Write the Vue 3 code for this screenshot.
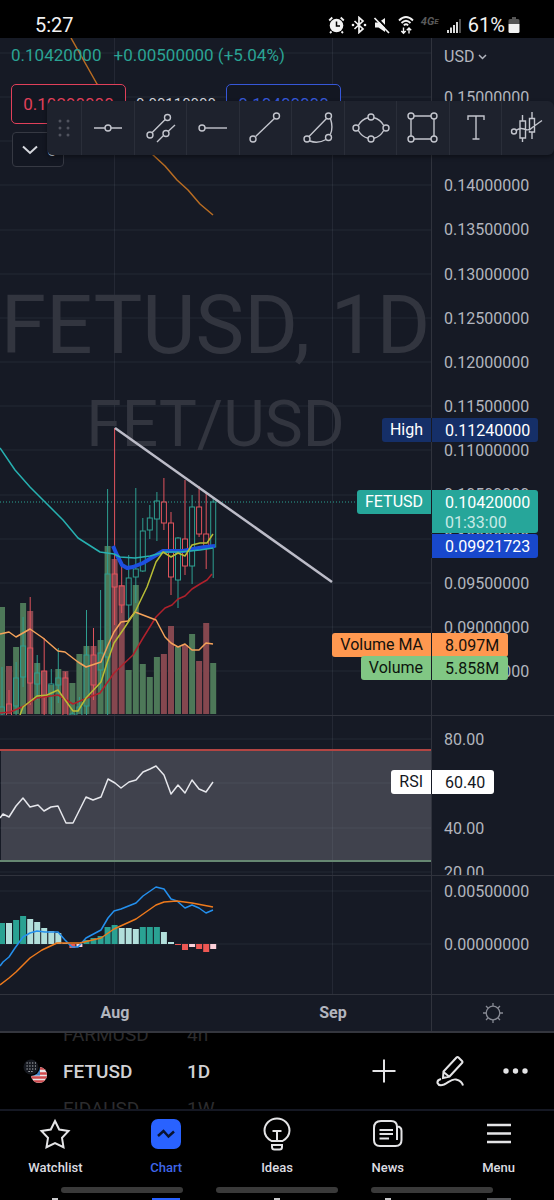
<script setup>
import { ref } from 'vue'

const STEP = 7.04
const FIRST = 2
const barX = (i) => Math.round((FIRST + i * STEP) * 10) / 10

// [high, low, body top, body bottom, direction, volume top]
const candles = [
  [667, 716, 707, 714, 'up', 607],
  [690, 716, 704, 716, 'down', 666],
  [662, 716, 678, 706, 'up', 647],
  [617, 687, 646, 677, 'up', 603],
  [597, 705, 648, 683, 'down', 611],
  [655, 700, 673, 684, 'up', 663],
  [638, 716, 671, 697, 'down', 671],
  [669, 716, 684, 693, 'up', 685],
  [648, 703, 678, 685, 'up', 669],
  [672, 716, 678, 716, 'down', 671],
  [712, 716, 714, 716, 'up', 683],
  [697, 716, 707, 716, 'up', 654],
  [610, 716, 655, 706, 'up', 646],
  [628, 700, 655, 685, 'down', 646],
  [590, 690, 653, 670, 'up', 640],
  [489, 716, 574, 657, 'up', 546],
  [428, 625, 574, 587, 'down', 559],
  [563, 613, 586, 605, 'down', 585],
  [555, 620, 578, 605, 'up', 670],
  [488, 603, 569, 577, 'up', 585],
  [518, 572, 531, 571, 'up', 664],
  [505, 539, 518, 530, 'up', 677],
  [492, 541, 501, 519, 'up', 657],
  [478, 530, 502, 523, 'down', 654],
  [512, 595, 523, 577, 'down', 626],
  [537, 608, 538, 580, 'up', 647],
  [480, 575, 539, 566, 'down', 645],
  [495, 584, 507, 566, 'up', 634],
  [486, 537, 507, 534, 'down', 661],
  [493, 569, 534, 546, 'down', 623],
  [497, 578, 502, 547, 'up', 663],
].map(([high, low, top, bottom, dir, vol], i) => ({ high, low, top, bottom, dir, vol, x: barX(i) }))

const ZERO = 944
const histogram = [
  [923, 'g'], [923, 'l'], [920, 'g'], [916, 'g'], [919, 'l'], [922, 'l'], [928, 'l'], [931, 'l'],
  [933, 'l'], [943, 'l'], [948, 'r'], [947, 'p'], [940, 'g'], [938, 'g'], [936, 'g'], [927, 'g'],
  [925, 'g'], [928, 'l'], [928, 'l'], [929, 'l'], [927, 'g'], [927, 'g'], [927, 'g'], [932, 'l'],
  [942, 'l'], [945, 'r'], [950, 'r'], [947, 'p'], [949, 'r'], [952, 'r'], [949, 'p'],
].map(([v, tone], i) => ({ tone, x: barX(i), y: Math.min(v, ZERO), h: Math.abs(v - ZERO) }))

const priceGrid = [53, 97, 141, 185, 230, 274, 318, 362, 406, 450, 495, 539, 583, 627, 671]
const priceLabels = [
  '0.15000000', '0.14500000', '0.14000000', '0.13500000', '0.13000000', '0.12500000', '0.12000000',
  '0.11500000', '0.11000000', '0.10500000', '0.10000000', '0.09500000', '0.09000000', '0.08500000',
]
const months = ['Aug', 'Sep']
const monthX = [114.5, 332.5]

const tabs = ['Watchlist', 'Chart', 'Ideas', 'News', 'Menu']
const activeTab = ref('Chart')
const currency = ref('USD')
</script>

<template>
  <div class="app">
    <header class="status">
      <span class="clock">5:27</span>
      <div class="tray">
        <svg width="17" height="18" viewBox="0 0 17 18" aria-label="Alarm">
          <circle cx="8.500" cy="9.500" r="6.800" fill="#f2f2f2" />
          <path d="M1.200 4.500 4.300 1.500M15.800 4.500 12.700 1.500M3.500 15.500 2 17M13.500 15.500 15 17" stroke="#f2f2f2" stroke-width="1.800" fill="none" />
          <path d="M8.500 5.500V10H12" stroke="#000" stroke-width="1.500" fill="none" />
        </svg>
        <svg width="16" height="18" viewBox="0 0 16 18" aria-label="Bluetooth">
          <path d="M3.500 5 12 13 8 16.500V1.500L12 5 3.500 13" stroke="#f2f2f2" stroke-width="1.700" fill="none" />
          <circle cx="2" cy="9" r="1.300" fill="#f2f2f2" /><circle cx="14" cy="9" r="1.300" fill="#f2f2f2" />
        </svg>
        <svg width="18" height="18" viewBox="0 0 18 18" aria-label="Muted">
          <path d="M2 6.500H5.500L12 2V16L5.500 11.500H2Z" fill="#f2f2f2" />
          <path d="M3 1 17 15.500" stroke="#000" stroke-width="2" />
          <path d="M1.500 2 16 17" stroke="#f2f2f2" stroke-width="1.700" />
        </svg>
        <svg class="wifi" width="18" height="20" viewBox="0 0 18 20" aria-label="Wi-Fi">
          <path d="M2 5.500Q9-1.500 16 5.500M4.500 8Q9 3.500 13.500 8M6.800 10.300Q9 8.300 11.200 10.300" stroke="#f2f2f2" stroke-width="1.800" fill="none" />
          <path d="M6.500 12.500V18M4.300 16 6.500 18.300 8.700 16M12 18.500V13M9.800 15.200 12 12.900 14.200 15.200" stroke="#f2f2f2" stroke-width="1.400" fill="none" />
        </svg>
        <span class="network">4G<small>E</small></span>
        <svg width="16" height="18" viewBox="0 0 16 18" aria-label="Signal">
          <path d="M2 14V17M5 11.500V17M8 9V17M11 6V17" stroke="#f2f2f2" stroke-width="1.800" />
          <path d="M14 3V17" stroke="#5a5a5a" stroke-width="1.800" />
        </svg>
        <span class="battery-level">61%</span>
        <svg class="battery" width="12" height="18" viewBox="0 0 12 18" aria-label="Battery">
          <path d="M4 1H8V3H10Q11.500 3 11.500 4.500V8H.5V4.500Q.5 3 2 3H4Z" fill="#555" />
          <path d="M.5 8H11.500V15.500Q11.500 17 10 17H2Q.5 17 .5 15.500Z" fill="#f2f2f2" />
        </svg>
      </div>
    </header>

    <main class="chart">
      <section class="pane">
        <div class="plot">
          <svg class="canvas" width="100%" height="677" aria-label="FETUSD daily price">
            <g transform="translate(0 -38)">
              <line v-for="y in priceGrid" :key="y" x1="0" x2="100%" :y1="y" :y2="y" class="grid" />
              <line v-for="x in monthX" :key="x" :x1="x" :x2="x" y1="38" y2="715" class="grid" />
              <text x="50%" y="353" class="mark big">FETUSD, 1D</text>
              <text x="50%" y="446" class="mark small">FET/USD</text>
              <rect v-for="c in candles" :key="'v' + c.x" :x="c.x - 3" :y="c.vol" width="6" :height="714 - c.vol" :class="['vol', c.dir]" />
              <line x1="0" x2="100%" y1="502" y2="502" class="last" />
              <g v-for="c in candles" :key="c.x" :class="['candle', c.dir]">
                <path :d="`M${c.x} ${c.high}V${c.top}M${c.x} ${c.bottom}V${c.low}`" />
                <rect :x="c.x - 2.5" :y="c.top" width="5" :height="c.bottom - c.top" />
              </g>
              <polyline class="ln slow" points="71,38 97,84 130,131 152,154 165,166 177,180 188,190 200,204 213,215" />
              <polyline class="ln red" points="0,713 10,712 15,710 22,707 37,698 58,695 73,704 87,698 100,693 114,673 133,655 143,638 156,617 165,608 172,605 178,599 185,596 192,589 200,584 207,580 212,574" />
              <polyline class="ln blue" points="113,546 117,555 122,565 127,568 133,567 143,563 153,557 163,551 172,551 183,551 193,549 205,547 215,546" />
              <polyline class="ln teal" points="0,448 15,470 30,487 45,502 63,520 78,538 89,545 100,552 114,554 120,557 135,558 150,556 165,552 180,552 200,550 213,548" />
              <polyline class="ln orange" points="0,634 9,632 16,637 30,629 43,638 58,651 65,652 78,662 86,667 101,662 108,645 114,632 121,622 128,621 135,612 156,620 165,637 171,643 178,647 185,644 192,650 199,650 206,643 213,644" />
              <polyline class="ln yellow" points="20,715 23,707 37,696 47,695 58,690 73,711 78,711 86,698 101,682 107,663 114,643 123,630 135,612 147,587 156,562 163,552 171,557 178,553 185,556 192,545 200,543 207,543 213,534" />
              <line class="trend" x1="115" y1="428" x2="332" y2="582" />
            </g>
          </svg>
          <div class="quote">
            <span>0.10420000</span>
            <span>+0.00500000 (+5.04%)</span>
          </div>
          <div class="deal">
            <button class="side sell">0.10290000</button>
            <span class="spread">0.00110000</span>
            <button class="side buy">0.10400000</button>
          </div>
          <button class="collapse" aria-label="Show 6 indicators">
            <svg width="18" height="12" viewBox="0 0 18 12"><path d="M2 2.500 9 9 16 2.500" stroke="#d5d7dd" stroke-width="2" fill="none" /></svg>
            <span>6</span>
          </button>
        </div>
        <div class="axis">
          <label class="currency">
            <select v-model="currency" aria-label="Currency"><option>USD</option></select>
            <svg width="9" height="6" viewBox="0 0 9 6"><path d="M1 1 4.500 4.500 8 1" stroke="#b2b5be" stroke-width="1.500" fill="none" /></svg>
          </label>
          <ul class="scale price">
            <li v-for="p in priceLabels" :key="p">{{ p }}</li>
          </ul>
          <div class="tag high"><b>High</b>0.11240000</div>
          <div class="tag now"><b>FETUSD</b>0.10420000<span>01:33:00</span></div>
          <div class="tag ma">0.09921723</div>
          <div class="tag vma"><b>Volume MA</b>8.097M</div>
          <div class="tag volume"><b>Volume</b>5.858M</div>
        </div>
      </section>

      <section class="pane">
        <div class="plot">
          <svg class="canvas" width="100%" height="159" aria-label="RSI">
            <g transform="translate(0 -716)">
              <rect x="1" y="750" width="100%" height="111" fill="#40424d" />
              <line v-for="y in [739, 783, 828, 872]" :key="y" x1="0" x2="100%" :y1="y" :y2="y" class="grid" />
              <line v-for="x in monthX" :key="x" :x1="x" :x2="x" y1="715" y2="875" class="grid" />
              <line x1="0" x2="100%" y1="750" y2="750" stroke="#b34543" stroke-width="2" />
              <line x1="0" x2="100%" y1="861" y2="861" stroke="#668772" stroke-width="2" />
              <polyline class="ln rsi" points="0,818 3,814 9,817 16,806 23,798 30,807 38,805 44,811 51,807 58,806 66,823 73,823 80,809 86,797 93,800 101,797 108,779 115,783 121,788 129,782 136,780 143,772 150,769 156,766 164,775 171,794 178,785 185,793 192,780 199,789 206,792 213,782" />
            </g>
          </svg>
        </div>
        <div class="axis clip">
          <ul class="scale rsi-scale">
            <li>80.00</li><li>60.00</li><li>40.00</li><li>20.00</li>
          </ul>
        </div>
        <div class="tag rsi-tag"><b>RSI</b>60.40</div>
      </section>

      <section class="pane">
        <div class="plot">
          <svg class="canvas" width="100%" height="118" aria-label="MACD">
            <g transform="translate(0 -876)">
              <line v-for="y in [891, 944]" :key="y" x1="0" x2="100%" :y1="y" :y2="y" class="grid" />
              <line v-for="x in monthX" :key="x" :x1="x" :x2="x" y1="875" y2="994" class="grid" />
              <rect v-for="b in histogram" :key="b.x" :x="b.x - 3" :y="b.y" width="6" :height="b.h" :class="['hist', b.tone]" />
              <polyline class="ln macd" points="0,966 3,962 9,957 15,948 23,937 30,933 37,931 45,932 58,932 65,940 72,947 78,947 86,938 101,930 108,918 114,911 121,909 136,903 143,896 156,887 164,889 171,899 177,901 185,908 192,905 199,908 206,913 213,910" />
              <polyline class="ln signal" points="0,985 9,978 16,972 23,965 30,958 42,950 57,943 80,943 101,938 114,929 136,919 156,905 164,902 177,901 192,903 213,907" />
            </g>
          </svg>
        </div>
        <div class="axis">
          <ul class="scale macd-scale">
            <li>0.00500000</li><li>0.00000000</li>
          </ul>
        </div>
      </section>

      <section class="pane">
        <div class="months"><span v-for="m in months" :key="m">{{ m }}</span></div>
        <div class="axis corner">
          <button aria-label="Chart settings">
            <svg width="22" height="22" viewBox="0 0 22 22" fill="none" stroke="#868993" stroke-width="1.300">
              <circle cx="11" cy="11" r="6.800" />
              <path d="M11 4V1M11 18V21M4 11H1M18 11H21M6.200 6.200 4 4M15.800 6.200 18 4M6.200 15.800 4 18M15.800 15.800 18 18" />
            </svg>
          </button>
        </div>
      </section>

      <div class="tools" role="toolbar" aria-label="Drawing tools">
        <span class="grip">
          <svg width="14" height="18" viewBox="0 0 14 18" fill="#50535e">
            <circle cx="3" cy="2" r="1.500" /><circle cx="11" cy="2" r="1.500" /><circle cx="3" cy="9" r="1.500" />
            <circle cx="11" cy="9" r="1.500" /><circle cx="3" cy="16" r="1.500" /><circle cx="11" cy="16" r="1.500" />
          </svg>
        </span>
        <button aria-label="Horizontal line">
          <svg viewBox="0 0 40 40"><path d="M6 20H17M23 20H34" /><circle cx="20" cy="20" r="3" /></svg>
        </button>
        <button aria-label="Parallel channel">
          <svg viewBox="0 0 40 40"><path d="M12.200 24.600 25.200 11.400M17 34 23.500 27.500M28 23.500 35 17" /><circle cx="10" cy="27" r="3" /><circle cx="27.500" cy="9.500" r="3" /><circle cx="26" cy="25.500" r="3" /></svg>
        </button>
        <button aria-label="Horizontal ray">
          <svg viewBox="0 0 40 40"><path d="M12 20H34" /><circle cx="9" cy="20" r="3" /></svg>
        </button>
        <button aria-label="Trend line">
          <svg viewBox="0 0 40 40"><path d="M10.600 28.600 29.400 10.400" /><circle cx="8" cy="31" r="3" /><circle cx="31.500" cy="8" r="3" /></svg>
        </button>
        <button aria-label="Arc">
          <svg viewBox="0 0 40 40"><path d="M11 28.500 28.500 10.500M32.500 10.800Q35.500 20 32.300 26.500M11.800 33Q20 36 28 31.500" /><circle cx="9" cy="31" r="3" /><circle cx="30.500" cy="8" r="3" /><circle cx="30.500" cy="29.500" r="3" /></svg>
        </button>
        <button aria-label="Ellipse">
          <svg viewBox="0 0 40 40"><path d="M7.300 17.500Q11 11 17 9.800M23 9.800Q29 11 32.700 17.500M7.300 22.500Q11 29 17 30.200M23 30.200Q29 29 32.700 22.500" /><circle cx="20" cy="9" r="3" /><circle cx="20" cy="31" r="3" /><circle cx="5" cy="20" r="3" /><circle cx="35" cy="20" r="3" /></svg>
        </button>
        <button aria-label="Rectangle">
          <svg viewBox="0 0 40 40"><path d="M11 8H28M11 31H28M8 11V28M31 11V28" /><circle cx="8" cy="8" r="3" /><circle cx="31" cy="8" r="3" /><circle cx="8" cy="31" r="3" /><circle cx="31" cy="31" r="3" /></svg>
        </button>
        <button aria-label="Text">
          <svg viewBox="0 0 40 40"><path d="M12 12V8H28V12M20 8V31M16.500 31H23.500" /></svg>
        </button>
        <button aria-label="Forecast">
          <svg viewBox="0 0 40 40"><path d="M14.500 7V13M14.500 30V34M24 4V10.500M24 24V31M12 13H17.500V30H12ZM21.500 10.500H26.500V24H21.500ZM8 22.500Q12 19.500 16 21 21 23.500 25 19L34 12.500" /><circle cx="6" cy="23.500" r="2.500" /></svg>
        </button>
      </div>
    </main>

    <section class="picker">
      <svg class="coin" width="24" height="24" viewBox="0 0 24 24" aria-hidden="true">
        <defs><clipPath id="flag"><circle cx="16" cy="16" r="8" /></clipPath></defs>
        <g clip-path="url(#flag)">
          <rect x="8" y="8" width="16" height="16" fill="#e8e4e6" />
          <path d="M8 9.500H24M8 14.500H24M8 18.500H24M8 22.500H24" stroke="#cf4a4d" stroke-width="2.400" />
          <rect x="8" y="8" width="9" height="8.500" fill="#3f7fc4" />
        </g>
        <circle cx="8" cy="8" r="9" fill="#000" /><circle cx="8" cy="8" r="7.500" fill="#15181f" />
        <path d="M3.500 4H13M3.500 7H13M3.500 10H13M5.500 12.500H11" stroke="#c8cbd0" stroke-width="1.200" stroke-dasharray="1.200 1.600" />
      </svg>
      <ul class="wheel symbols"><li>FARMUSD</li><li class="on">FETUSD</li><li>FIDAUSD</li></ul>
      <ul class="wheel"><li>4h</li><li class="on">1D</li><li>1W</li></ul>
      <div class="actions">
        <button aria-label="Add">
          <svg width="30" height="30" viewBox="0 0 30 30"><path d="M15 3.500V26.500M3.500 15H26.500" /></svg>
        </button>
        <button aria-label="Draw">
          <svg width="30" height="32" viewBox="0 0 30 32"><path d="M8.500 16.500 21.500 2.500Q22.500 1.500 23.500 2.500L27 6Q28 7 27 8L14.500 21.500 8 23ZM8.500 17 14 21.500M6 24Q2 25 2.500 28 4 31.500 9 29.500C14 27 17 23.500 21 24.500Q27 26 28 30.500" /></svg>
        </button>
        <button aria-label="More">
          <svg width="28" height="30" viewBox="0 0 28 30"><g class="dots"><circle cx="5" cy="15" r="2.700" /><circle cx="14.500" cy="15" r="2.700" /><circle cx="24" cy="15" r="2.700" /></g></svg>
        </button>
      </div>
    </section>

    <nav class="tabs">
      <a v-for="t in tabs" :key="t" href="#" :class="{ active: t === activeTab }" @click.prevent="activeTab = t">
        <svg width="34" height="34" viewBox="0 0 34 34">
          <path v-if="t === 'Watchlist'" d="M17 4 21.200 12.500 30.500 14 24 20.800 25.500 30.200 17 26 8.500 30.200 10 20.800 3.500 14 12.800 12.500Z" />
          <g v-else-if="t === 'Chart'">
            <rect class="chip" x="2" y="2" width="30" height="30" rx="7" />
            <path class="wave" d="M9 19 14.500 14 19.500 19.500 25 14.500" />
          </g>
          <g v-else-if="t === 'Ideas'">
            <path d="M11.500 24Q4.500 20 4.500 13.500A12.500 12 0 0 1 29.500 13.500Q29.500 20 22.500 24ZM12 28H22V30Q22 32.500 19.500 32.500H14.500Q12 32.500 12 30ZM12.500 14H21.500M17 14V23.500" />
          </g>
          <g v-else-if="t === 'News'">
            <path d="M10 4H20Q26 4 26 10V23M26 9.500Q30.500 9.500 30.500 14V23Q30.500 29 24.500 29H9Q3 29 3 23V11Q3 4 10 4" />
            <path d="M8.500 13H22M8.500 17H22M8.500 21.500H18" />
          </g>
          <path v-else class="bars" d="M5 8H29M5 16.500H29M5 25H29" />
        </svg>
        <span>{{ t }}</span>
      </a>
    </nav>
    <div class="handles"><i></i><i></i><i></i></div>
    <div class="peek"><i class="w"></i><i class="c"></i><i class="w"></i><i class="w"></i><i class="m"></i></div>
  </div>
</template>

<style>
body {
  margin: 0;
  background: #000;
}
</style>

<style scoped>
.app {
  background: #000;
  color: #b2b5be;
  font: 16px/20px Roboto, "Liberation Sans", sans-serif;
  overflow: hidden;
}
button, select {
  font: inherit;
  color: inherit;
  background: none;
  border: 0;
  padding: 0;
  appearance: none;
}
ul {
  list-style: none;
  margin: 0;
  padding: 0;
}
svg { display: block; flex: none; }

.status {
  display: flex;
  align-items: center;
  justify-content: space-between;
  height: 38px;
  padding: 11px 34px 0 35px;
  box-sizing: border-box;
  color: #f2f2f2;
  font-size: 20px;
}
.tray { display: flex; align-items: center; gap: 6px; }
.network {
  width: 19px;
  font: italic 700 11px/12px Roboto, sans-serif;
  color: #5a5a5a;
  padding-bottom: 6px;
}
.network small { font-size: 8px; vertical-align: top; }
.battery-level { margin-right: -3px; }

.chart {
  position: relative;
  background: #161a25;
  border-bottom: 2px solid #34363e;
}
.pane {
  position: relative;
  display: grid;
  grid-template-columns: minmax(0, 1fr) 123px;
}
.pane + .pane { border-top: 1px solid #30333d; }
.plot { position: relative; min-width: 0; }
.axis {
  position: relative;
  border-left: 1px solid #30333d;
  box-sizing: border-box;
}
.clip { overflow: hidden; height: 159px; }

.grid { stroke: #8c93a8; stroke-opacity: 0.12; }
.mark { fill: #32353f; text-anchor: middle; }
.big { font-size: 82px; }
.small { font-size: 64px; }
.vol.up { fill: #4d7858; }
.vol.down { fill: #85474f; }
.last { stroke: #2aa394; stroke-dasharray: 1 2; }
.candle { fill: none; }
.candle.up { stroke: #2e9e90; }
.candle.down { stroke: #e0535c; }
.ln { fill: none; stroke-width: 1.5; stroke-linejoin: round; }
.slow { stroke: #b86c22; }
.red { stroke: #b0212c; }
.blue { stroke: #1d4fe0; stroke-width: 4; }
.teal { stroke: #27b0b0; }
.orange { stroke: #f5a25a; }
.yellow { stroke: #b8bd35; }
.trend { stroke: #bcbcc8; stroke-width: 2.5; }
.rsi { stroke: #e6e7ec; }
.macd { stroke: #2490ee; }
.signal { stroke: #ee7a1c; }
.hist.g { fill: #2aa293; }
.hist.l { fill: #b2dfdb; }
.hist.r { fill: #ee5753; }
.hist.p { fill: #fbcfd8; }

/* Quote and order buttons float over the plot */
.quote {
  position: absolute;
  top: 7px;
  left: 11px;
  display: flex;
  gap: 12px;
  font-size: 17px;
  color: #2aa394;
  white-space: nowrap;
}
.deal {
  position: absolute;
  top: 46px;
  left: 11px;
  display: flex;
  align-items: center;
}
.side {
  width: 115px;
  height: 40px;
  border: 1px solid;
  border-radius: 5px;
  background: #131722;
  font-size: 17px;
}
.sell { color: #e0405a; }
.buy { color: #3657d8; }
.spread { width: 100px; text-align: center; font-size: 15px; color: #d1d4dc; }
.collapse {
  position: absolute;
  top: 94px;
  left: 12px;
  width: 52px;
  height: 35px;
  display: flex;
  align-items: center;
  gap: 8px;
  padding-left: 8px;
  border: 1px solid #363943;
  border-radius: 4px;
  background: #131722;
  font-size: 17px;
  color: #d1d4dc;
}

.currency {
  display: flex;
  align-items: center;
  gap: 2px;
  height: 37px;
  padding-left: 12px;
}
.currency select { width: 32px; height: 20px; }
.scale {
  display: flex;
  flex-direction: column;
  justify-content: space-between;
  padding-left: 12px;
}
.price { margin-top: 13px; height: 594px; }
.rsi-scale { padding-top: 14px; height: 153px; }
.macd-scale { padding-top: 6px; height: 73px; }

.tag {
  position: absolute;
  left: -1px;
  width: 107px;
  min-height: 24px;
  padding: 3px 0 1px 13px;
  box-sizing: border-box;
  border-left: 1px solid #161a25;
  border-radius: 0 3px 3px 0;
  color: #fff;
}
.tag b {
  position: absolute;
  top: 0;
  right: 100%;
  padding: 2px 8px;
  margin-right: 1px;
  border-radius: 3px 0 0 3px;
  background: inherit;
  font-weight: 400;
  white-space: nowrap;
}
.tag span { display: block; line-height: 19px; color: #c9eae6; }
.high { top: 380px; background: #152f68; }
.now { top: 452px; background: #26a69a; }
.ma { top: 496px; background: #1848cc; }
.vma { top: 595px; width: 77px; background: #ff9850; color: #14100c; }
.volume { top: 618px; width: 77px; background: #81c784; color: #0c140d; }
.rsi-tag { top: 54px; left: auto; right: 60px; width: 63px; background: #fff; color: #131722; }

.months {
  display: flex;
  min-width: 0;
  overflow: hidden;
  padding-left: 6px;
  line-height: 36px;
  font-weight: 700;
}
.months span { flex: 0 0 218px; text-align: center; }
.corner { display: grid; place-items: center; }

/* Floating drawing toolbar */
.tools {
  position: absolute;
  top: 63px;
  left: 47px;
  right: 0;
  display: grid;
  grid-template-columns: 34px repeat(9, minmax(0, 1fr));
  height: 54px;
  border-radius: 6px;
  background: #1e222d;
  box-shadow: 0 2px 4px rgba(0, 0, 0, 0.4);
}
.tools > * { display: grid; place-items: center; }
.tools button { border-left: 1px solid #2a2e39; }
.tools button svg {
  width: 40px;
  height: 40px;
  fill: none;
  stroke: #c3c5cd;
  stroke-width: 1.4;
}

.picker {
  display: grid;
  grid-template-columns: 24px 140px auto 1fr;
  height: 76px;
  padding: 0 25px 0 23px;
  align-items: center;
  border-bottom: 2px solid #151823;
  overflow: hidden;
}
.wheel {
  display: flex;
  flex-direction: column;
  justify-content: center;
  height: 76px;
  overflow: hidden;
  font-size: 19px;
  color: #2c2c2e;
}
.wheel li { flex: none; line-height: 37px; }
.wheel .on { color: #d1d1d4; font-weight: 500; }
.symbols { padding-left: 16px; }
.actions {
  display: flex;
  justify-content: flex-end;
  align-items: center;
  gap: 36px;
}
.actions svg { fill: none; stroke: #e4e4e6; stroke-width: 2; }
.actions .dots { fill: #e4e4e6; stroke: none; }

.tabs {
  display: grid;
  grid-template-columns: repeat(5, 1fr);
  height: 76px;
}
.tabs a {
  display: flex;
  flex-direction: column;
  align-items: center;
  padding-top: 6px;
  color: #dcdce0;
  font-size: 13px;
  font-weight: 500;
  text-decoration: none;
}
.tabs span { margin-top: 7px; }
.tabs .active { color: #3f66e8; }
.tabs svg { fill: none; stroke: #e4e4e6; stroke-width: 2; }
.tabs .chip { fill: #2962ff; stroke: none; }
.tabs .wave { stroke: #0a1330; stroke-width: 2.5; }
.tabs .bars { stroke-width: 2.5; }

.handles {
  display: flex;
  justify-content: space-between;
  width: 78%;
  margin: 0 auto;
}
.handles i { width: 122px; height: 6px; border-radius: 3px; background: #3a3a3a; }
.peek {
  display: grid;
  grid-template-columns: repeat(5, 1fr);
  justify-items: center;
  padding-top: 5px;
}
.peek i { height: 2px; }
.peek .w { width: 6px; background: #c8c8ca; }
.peek .c { width: 28px; background: #2962ff; }
.peek .m { width: 24px; background: #55565a; }
</style>
